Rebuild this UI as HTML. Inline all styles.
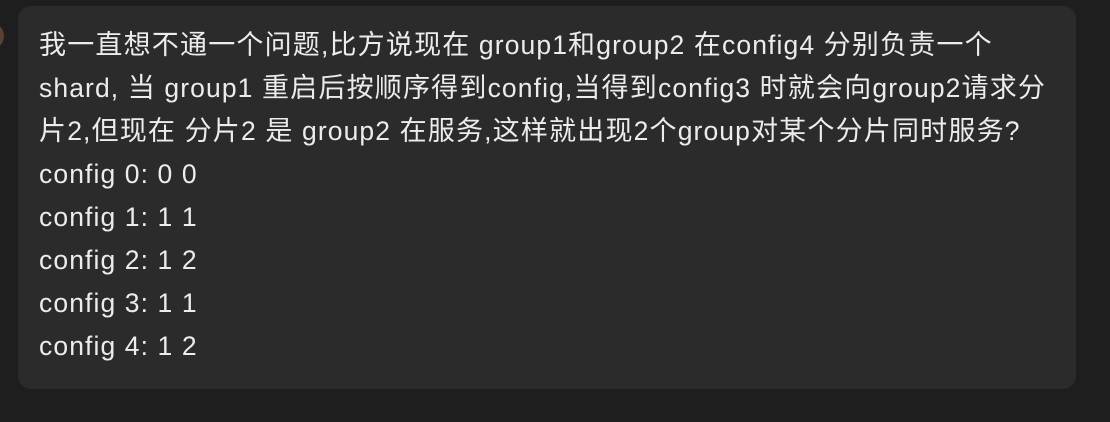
<!DOCTYPE html>
<html><head><meta charset="utf-8"><style>
html,body{margin:0;padding:0;background:#1e1e1e;width:1110px;height:422px;overflow:hidden}
.av{position:absolute;left:-24px;top:22px;width:28px;height:28px;border-radius:50%;background:#5a4030}
.b{position:absolute;left:18px;top:6px;width:1058px;height:383px;background:#2b2b2b;border-radius:13px}
.t{position:absolute;left:39px;top:24px;width:1030px;font-family:"Liberation Sans","Noto Sans CJK SC",sans-serif;font-size:26.5px;letter-spacing:1.1px;line-height:43px;color:#ececec;white-space:pre}
.t i{font-style:normal;font-size:27px;letter-spacing:1.2px;line-height:1;font-family:"Noto Sans CJK SC",sans-serif}
</style></head><body>
<div class="av"></div>
<div class="b"></div>
<div class="t"><i>我一直想不通一个问题</i>,<i>比方说现在</i> group1<i>和</i>group2 <i>在</i>config4 <i>分别负责一个</i>
shard, <i>当</i> group1 <i>重启后按顺序得到</i>config,<i>当得到</i>config3 <i>时就会向</i>group2<i>请求分</i>
<i>片</i>2,<i>但现在</i> <i>分片</i>2 <i>是</i> group2 <i>在服务</i>,<i>这样就出现</i>2<i>个</i>group<i>对某个分片同时服务</i>?
config 0: 0 0
config 1: 1 1
config 2: 1 2
config 3: 1 1
config 4: 1 2</div>
</body></html>
